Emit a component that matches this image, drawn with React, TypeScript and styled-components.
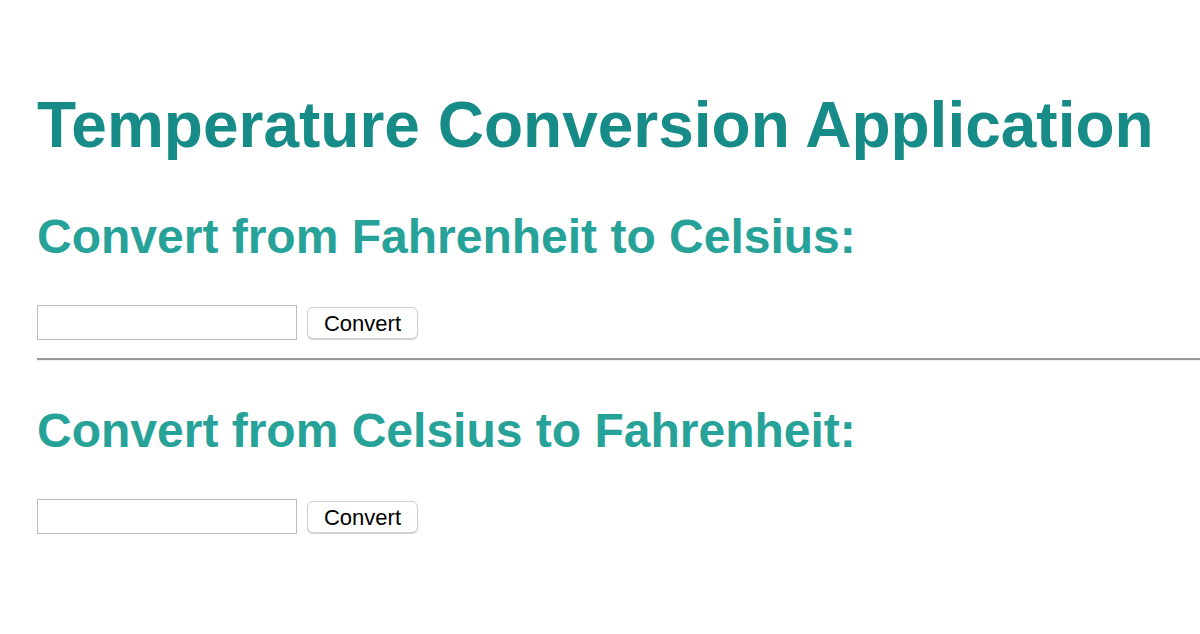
import React from 'react';
import styled, { createGlobalStyle } from 'styled-components';

const GlobalStyle = createGlobalStyle`
  html, body {
    margin: 0;
    padding: 0;
    background: #ffffff;
  }

  body {
    font-family: 'Liberation Sans', Arial, Helvetica, sans-serif;
    overflow: hidden;
  }
`;

const Page = styled.main`
  padding: 88px 0 0 37px;
`;

const Title = styled.h1`
  margin: 0;
  font-size: 64px;
  line-height: 74px;
  font-weight: 700;
  color: #168b87;
  white-space: nowrap;
`;

const Section = styled.section<{ $first?: boolean }>`
  margin-top: ${(p) => (p.$first ? '47px' : '42px')};
`;

const SectionHeading = styled.h2`
  margin: 0;
  font-size: 48px;
  line-height: 56px;
  font-weight: 700;
  color: #26a299;
  white-space: nowrap;
`;

const FormRow = styled.form`
  display: flex;
  align-items: center;
  gap: 10px;
  margin-top: 40px;
`;

const TextInput = styled.input`
  box-sizing: border-box;
  width: 260px;
  height: 35px;
  margin: 0;
  padding: 0 6px;
  border: 1px solid #bdbdbd;
  border-radius: 0;
  font-family: 'Liberation Sans', Arial, sans-serif;
  font-size: 20px;
  outline: none;
`;

const ConvertButton = styled.button`
  box-sizing: border-box;
  width: 111px;
  height: 32px;
  margin: 0;
  padding: 2px 0 0;
  background: #ffffff;
  border: 1px solid #cfcfcf;
  border-radius: 6px;
  box-shadow: 0 1px 1px rgba(0, 0, 0, 0.18);
  font-family: 'Liberation Sans', Arial, sans-serif;
  font-size: 22px;
  color: #000000;
  line-height: 28px;
`;

const Divider = styled.hr`
  margin: 18px 0 0;
  height: 0;
  border: none;
  border-top: 2px solid #9a9a9a;
  border-bottom: 1px solid #eeeeee;
`;

const Converter = ({ heading, first }: { heading: string; first?: boolean }) => (
  <Section $first={first}>
    <SectionHeading>{heading}</SectionHeading>
    <FormRow onSubmit={(e) => e.preventDefault()}>
      <TextInput type='text' />
      <ConvertButton type='submit'>Convert</ConvertButton>
    </FormRow>
  </Section>
);

const App = () => {
  return (
    <>
      <GlobalStyle />
      <Page>
        <Title>Temperature Conversion Application</Title>
        <Converter heading='Convert from Fahrenheit to Celsius:' first />
        <Divider />
        <Converter heading='Convert from Celsius to Fahrenheit:' />
      </Page>
    </>
  );
};

export default App;
